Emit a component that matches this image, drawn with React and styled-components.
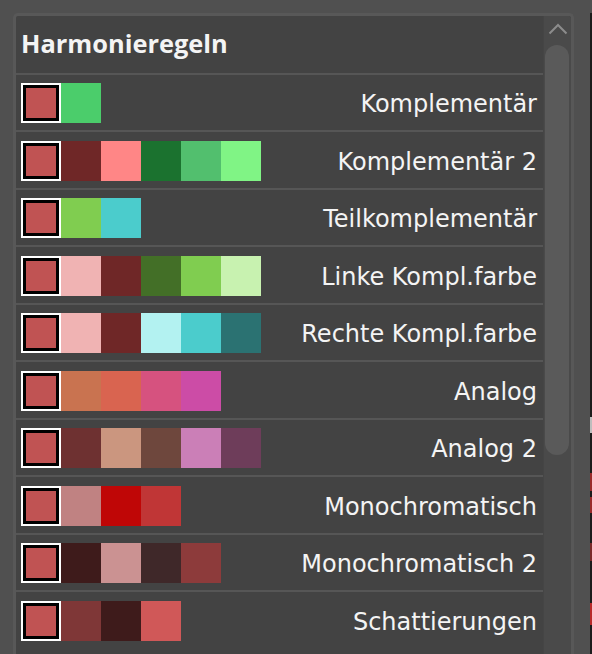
import React from "react";
import styled, { createGlobalStyle } from "styled-components";

const Global = createGlobalStyle`
  html, body { margin: 0; padding: 0; background: #505050; overflow: hidden; }
  body { font-family: "Open Sans", "DejaVu Sans", sans-serif; }
`;

const Screen = styled.div`
  display: flex;
  height: 654px;
  padding: 13px 0 0 13px;
  box-sizing: border-box;
`;

const Panel = styled.div`
  display: flex;
  width: 561px;
  box-sizing: border-box;
  flex: none;
  border: 3px solid #585858;
  border-bottom: none;
  border-radius: 5px 5px 0 0;
  overflow: hidden;
  background: #434343;
`;

const List = styled.div`
  flex: 1;
  display: flex;
  flex-direction: column;
  min-width: 0;
`;

const Header = styled.div`
  height: 56.7px;
  flex: none;
  display: flex;
  align-items: center;
  padding: 0 0 2px 5px;
  box-sizing: border-box;
  color: #f4f4f4;
  font-family: "Open Sans", "DejaVu Sans", sans-serif;
  font-weight: 700;
  font-size: 25.4px;
`;

const Row = styled.div`
  display: flex;
  align-items: flex-start;
  flex: none;
  height: 57.5px;
  box-sizing: border-box;
  border-top: 2px solid #565656;
  padding: 8.5px 6px 0 5px;
`;

const Swatches = styled.div`
  display: flex;
`;

const Swatch = styled.div`
  width: 40px;
  height: 40px;
  flex: none;
  background: ${(p) => p.$c};
`;

const BaseSwatch = styled(Swatch)`
  box-sizing: border-box;
  border: 2px solid #ffffff;
  box-shadow: inset 0 0 0 3px #000000;
`;

const Label = styled.div`
  margin-left: auto;
  align-self: center;
  margin-top: -5px;
  color: #f4f4f4;
  font-family: "DejaVu Sans", "Open Sans", sans-serif;
  font-size: 24px;
  white-space: nowrap;
`;

const ScrollCol = styled.div`
  width: 28px;
  flex: none;
  background: #4a4a4a;
  display: flex;
  flex-direction: column;
  align-items: center;
  box-shadow: inset 1px 0 0 #454545;
`;

const Chevron = styled.svg`
  width: 20px;
  height: 12px;
  margin-top: 7px;
  margin-left: 1px;
  flex: none;
`;

const Thumb = styled.div`
  width: 24px;
  height: 410px;
  margin-top: 10px;
  border-radius: 12px;
  background: #5a5a5a;
  flex: none;
`;

const Gap = styled.div`
  width: 16px;
  flex: none;
`;

const EdgeStrip = styled.div`
  width: 2px;
  flex: none;
  background: linear-gradient(
    to bottom,
    #1c1c1c 0,
    #1c1c1c 404px,
    #bdbdbd 404px,
    #bdbdbd 420px,
    #1c1c1c 420px,
    #1c1c1c 460px,
    #9a2b2b 460px,
    #9a2b2b 478px,
    #1c1c1c 478px,
    #1c1c1c 484px,
    #9a2b2b 484px,
    #9a2b2b 500px,
    #1c1c1c 500px,
    #1c1c1c 530px,
    #7a2a2a 530px,
    #7a2a2a 548px,
    #1c1c1c 548px,
    #1c1c1c 590px,
    #b82a2a 590px,
    #b82a2a 612px,
    #1c1c1c 612px
  );
`;

const BASE = "#c05353";

const rules = [
  { name: "Komplementär", colors: ["#4bcd6b"] },
  { name: "Komplementär 2", colors: ["#6f2727", "#ff8686", "#1b722f", "#52bf6e", "#80f485"] },
  { name: "Teilkomplementär", colors: ["#80cd50", "#4bcccc"] },
  { name: "Linke Kompl.farbe", colors: ["#f0b3b3", "#6f2727", "#436f27", "#80cd50", "#c8f2b0"] },
  { name: "Rechte Kompl.farbe", colors: ["#f0b3b3", "#6f2727", "#b3f2f1", "#4bcccc", "#2b7272"] },
  { name: "Analog", colors: ["#c97350", "#d96450", "#d6527f", "#cc4ca6"] },
  { name: "Analog 2", colors: ["#6e3131", "#cb967f", "#6e473d", "#cb7fb7", "#6e3d5a"] },
  { name: "Monochromatisch", colors: ["#c08282", "#bf0606", "#c03636"] },
  { name: "Monochromatisch 2", colors: ["#3e1b1b", "#cb9292", "#3f2829", "#8d3b3b"] },
  { name: "Schattierungen", colors: ["#7f3737", "#3e1b1b", "#d05858"] },
];

export default function App() {
  return (
    <>
      <Global />
      <Screen>
        <Panel>
          <List>
            <Header>Harmonieregeln</Header>
            {rules.map((r) => (
              <Row key={r.name}>
                <Swatches>
                  <BaseSwatch $c={BASE} />
                  {r.colors.map((c, i) => (
                    <Swatch key={i} $c={c} />
                  ))}
                </Swatches>
                <Label>{r.name}</Label>
              </Row>
            ))}
          </List>
          <ScrollCol>
            <Chevron viewBox="0 0 20 12">
              <polyline
                points="1.5,10.5 10,2 18.5,10.5"
                fill="none"
                stroke="#8c8c8c"
                strokeWidth="2"
              />
            </Chevron>
            <Thumb />
          </ScrollCol>
        </Panel>
        <Gap />
        <EdgeStrip />
      </Screen>
    </>
  );
}
